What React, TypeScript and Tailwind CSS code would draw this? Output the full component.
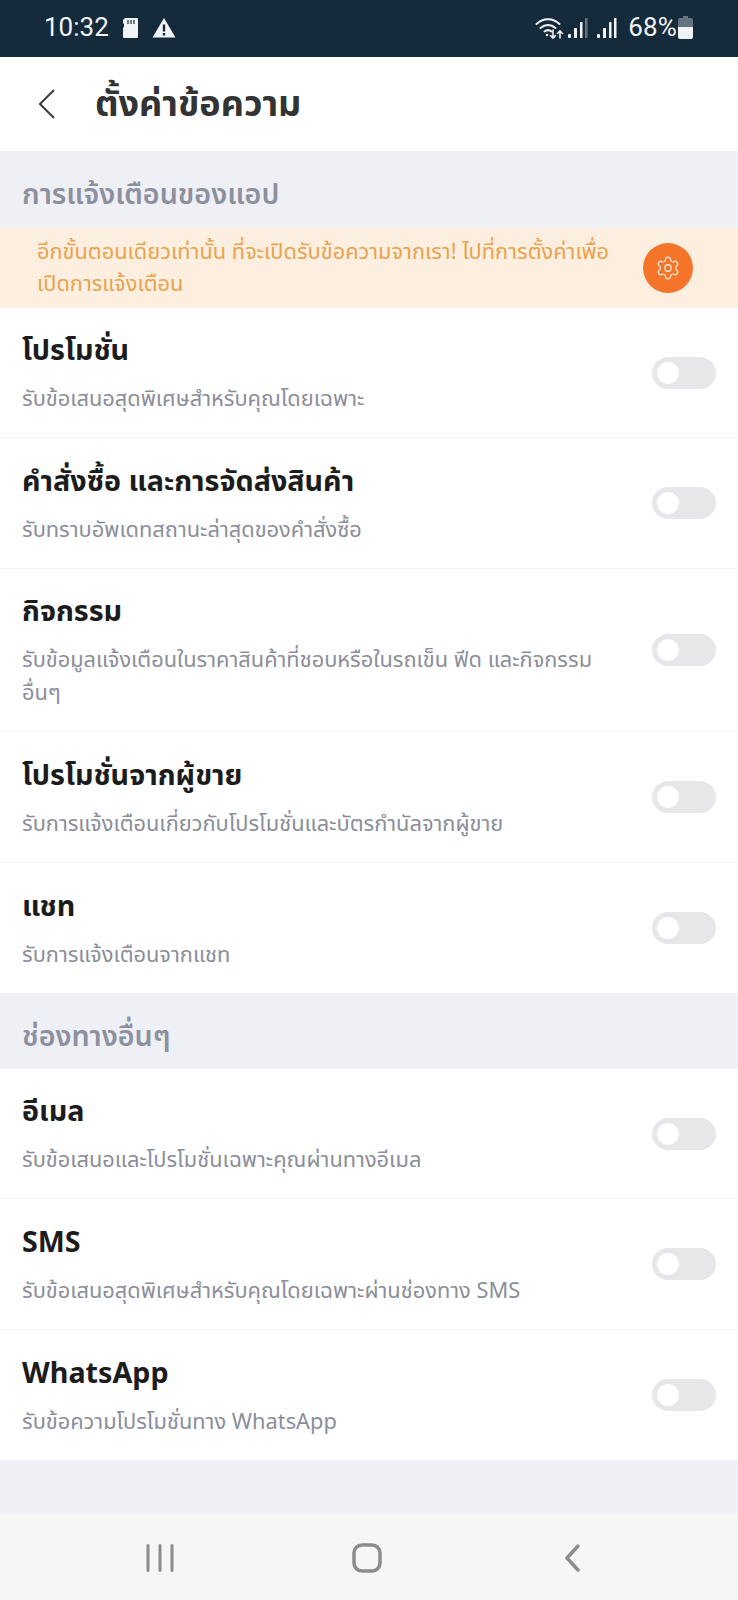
import { Settings } from "lucide-react";

const thaiFont = "font-['Noto_Sans','Noto_Sans_Thai','Liberation_Sans',sans-serif]";

type Row = {
  title: string;
  sub: string;
  height: string;
};

const appRows: Row[] = [
  { title: "โปรโมชั่น", sub: "รับข้อเสนอสุดพิเศษสำหรับคุณโดยเฉพาะ", height: "h-[130px]" },
  { title: "คำสั่งซื้อ และการจัดส่งสินค้า", sub: "รับทราบอัพเดทสถานะล่าสุดของคำสั่งซื้อ", height: "h-[131px]" },
  { title: "กิจกรรม", sub: "รับข้อมูลแจ้งเตือนในราคาสินค้าที่ชอบหรือในรถเข็น ฟีด และกิจกรรมอื่นๆ", height: "h-[163px]" },
  { title: "โปรโมชั่นจากผู้ขาย", sub: "รับการแจ้งเตือนเกี่ยวกับโปรโมชั่นและบัตรกำนัลจากผู้ขาย", height: "h-[131px]" },
  { title: "แชท", sub: "รับการแจ้งเตือนจากแชท", height: "h-[130px]" },
];

const otherRows: Row[] = [
  { title: "อีเมล", sub: "รับข้อเสนอและโปรโมชั่นเฉพาะคุณผ่านทางอีเมล", height: "h-[130px]" },
  { title: "SMS", sub: "รับข้อเสนอสุดพิเศษสำหรับคุณโดยเฉพาะผ่านช่องทาง SMS", height: "h-[131px]" },
  { title: "WhatsApp", sub: "รับข้อความโปรโมชั่นทาง WhatsApp", height: "h-[130px]" },
];

function SettingRow({ row, last }: { row: Row; last?: boolean }) {
  return (
    <div className={`flex items-center bg-white pl-[22px] pr-[22px] ${row.height} ${last ? "" : "border-b border-[#f4f4f5]"}`}>
      <div className="w-[578px]">
        <div className="text-[28.7px] leading-[36px] font-bold text-[#1c1c1c]">{row.title}</div>
        <div className="mt-[14px] text-[21.8px] leading-[33px] text-[#8b8e99]">{row.sub}</div>
      </div>
      <div className="ml-auto flex h-[32px] w-[64px] items-center rounded-full bg-[#e6e7e9] pl-[5px]">
        <div className="h-[22px] w-[22px] rounded-full bg-white" />
      </div>
    </div>
  );
}

function SectionHead({ label, height }: { label: string; height: string }) {
  return (
    <div className={`flex items-center bg-[#eff0f5] pl-[22px] pt-[7px] text-[28.7px] font-semibold text-[#8d909f] ${height}`}>
      {label}
    </div>
  );
}

function StatusBar() {
  return (
    <div className="flex h-[57px] items-center bg-[#152a3b] pl-[44px] pr-[45px] pb-[2px] text-[#f1f4f6]">
      <span className="font-['Roboto',sans-serif] text-[26px]">10:32</span>
      <svg className="ml-[13px]" width="16" height="22" viewBox="0 0 16 22">
        <path d="M3 1h12a1 1 0 0 1 1 1v18a1 1 0 0 1-1 1H2a1 1 0 0 1-1-1v-9l1-1V7L1 6V3z" fill="#f1f4f6" />
        <path d="M6 3v4M9 3v4M12 3v4" stroke="#152a3b" strokeWidth="1.2" />
      </svg>
      <svg className="ml-[14px]" width="24" height="21" viewBox="0 0 24 21">
        <path d="M12 1 23.5 20.5H.5z" fill="#f1f4f6" />
        <path d="M12 7.5v7M12 16v2.5" stroke="#152a3b" strokeWidth="2.4" />
      </svg>
      <div className="ml-auto flex items-center">
        <svg width="30" height="24" viewBox="0 0 30 24" fill="none" stroke="#f1f4f6" strokeLinecap="round">
          <path d="M1.500 8C8 1.500 18 1.500 24.500 8" strokeWidth="2" />
          <path d="M5.500 12c4.500-4 10.500-4 15 0" strokeWidth="2" />
          <path d="M9.500 15.500c2.500-2 4.500-2 7 0" strokeWidth="2" />
          <circle cx="12" cy="19" r="1.200" fill="#f1f4f6" stroke="none" />
          <path d="M18 14v8M15.500 19.500 18 22l2.500-2.500M25 22v-7M22.500 17.500 25 15l2.500 2.500" strokeWidth="1.600" />
        </svg>
        <svg className="ml-[3px]" width="20" height="22" viewBox="0 0 20 22" fill="#f1f4f6">
          <rect x="0" y="17" width="3" height="4" rx="1" />
          <rect x="6" y="11" width="3" height="10" rx="0.500" />
          <rect x="12" y="5" width="2.500" height="16" rx="0.500" />
          <rect x="17" y="1" width="2.500" height="20" rx="0.500" fill="#66747f" />
        </svg>
        <svg className="ml-[9px]" width="20" height="22" viewBox="0 0 20 22" fill="#f1f4f6">
          <rect x="0" y="17" width="3" height="4" rx="1" />
          <rect x="6" y="11" width="3" height="10" rx="0.500" />
          <rect x="12" y="5" width="2.500" height="16" rx="0.500" />
          <rect x="17" y="1" width="2.500" height="20" rx="0.500" />
        </svg>
        <span className="ml-[11px] font-['Roboto',sans-serif] text-[26px] tracking-[0.2px]">68%</span>
        <svg className="ml-[1px]" width="15" height="23" viewBox="0 0 15 23">
          <path d="M5 0h5v2h3a2 2 0 0 1 2 2v7H0V4a2 2 0 0 1 2-2h3z" fill="#66747f" />
          <path d="M0 11h15v10a2 2 0 0 1-2 2H2a2 2 0 0 1-2-2z" fill="#f1f4f6" />
        </svg>
      </div>
    </div>
  );
}

export default function App() {
  return (
    <div className={`flex h-[1600px] w-[738px] flex-col overflow-hidden bg-[#eff0f5] ${thaiFont}`}>
      <StatusBar />

      <div className="flex h-[94px] items-center bg-white pl-[38px]">
        <svg width="18" height="32" viewBox="0 0 18 32" fill="none" stroke="#3a3a3a" strokeWidth="2">
          <path d="M16 2 2 16l14 14" />
        </svg>
        <h1 className="ml-[39px] -mt-[3px] text-[36px] font-bold text-[#333333]">ตั้งค่าข้อความ</h1>
      </div>

      <SectionHead label="การแจ้งเตือนของแอป" height="h-[77px]" />

      <div className="flex h-[80px] items-center bg-[#fcefdf] pl-[37px] pr-[45px]">
        <p className="-mt-[2px] w-[580px] text-[21.8px] leading-[32px] text-[#e9a24f]">
          อีกขั้นตอนเดียวเท่านั้น ที่จะเปิดรับข้อความจากเรา! ไปที่การตั้งค่าเพื่อเปิดการแจ้งเตือน
        </p>
        <div className="ml-auto flex h-[50px] w-[50px] items-center justify-center rounded-full bg-[#f4752a]">
          <Settings size={26} strokeWidth={1.2} color="#fde8d4" />
        </div>
      </div>

      {appRows.map((row, i) => (
        <SettingRow key={row.title} row={row} last={i === appRows.length - 1} />
      ))}

      <SectionHead label="ช่องทางอื่นๆ" height="h-[76px]" />

      {otherRows.map((row, i) => (
        <SettingRow key={row.title} row={row} last={i === otherRows.length - 1} />
      ))}

      <div className="h-[54px] bg-[#eff0f5]" />

      <div className="flex h-[86px] items-center bg-[#f5f6f6] pt-[2px]">
        <svg className="ml-[146px]" width="28" height="28" viewBox="0 0 28 28" stroke="#8c8c8c" strokeWidth="3" strokeLinecap="round">
          <path d="M2 1.500v25M14 1.500v25M26 1.500v25" />
        </svg>
        <svg className="ml-[178px]" width="30" height="30" viewBox="0 0 30 30" fill="none" stroke="#8c8c8c" strokeWidth="3.500">
          <rect x="2" y="2" width="26" height="26" rx="8" />
        </svg>
        <svg className="ml-[181px]" width="18" height="28" viewBox="0 0 18 28" fill="none" stroke="#8c8c8c" strokeWidth="3.500" strokeLinecap="round" strokeLinejoin="round">
          <path d="M15 2 4 14l11 12" />
        </svg>
      </div>
    </div>
  );
}
